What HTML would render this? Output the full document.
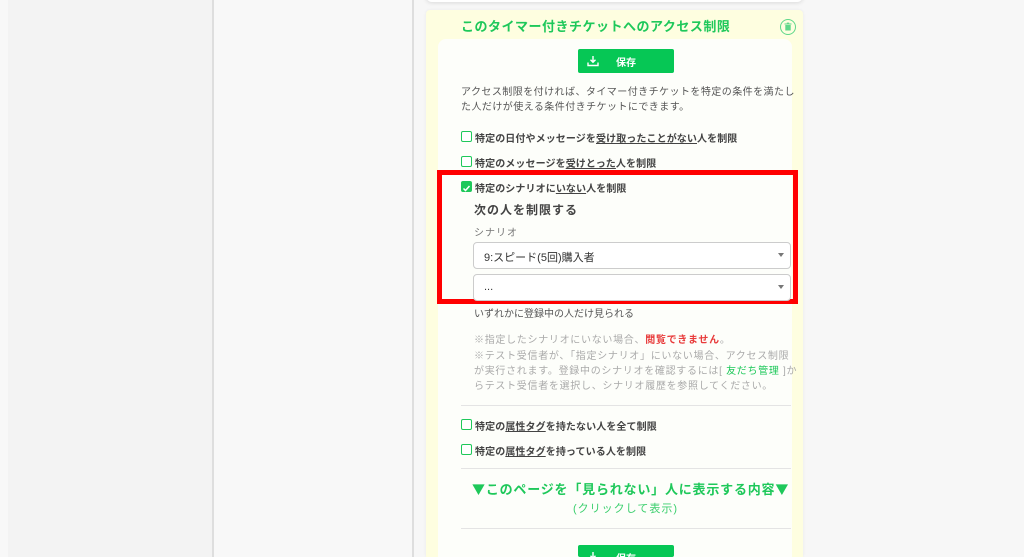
<!DOCTYPE html>
<html style="width:1024px;height:557px;overflow:hidden"><head><meta charset="utf-8"><style>
*{box-sizing:border-box;margin:0;padding:0}
body{width:1024px;height:557px;overflow:hidden;background:#f7f7f7;font-family:"Liberation Sans","Noto Sans CJK JP",sans-serif;position:relative;color:#444}
.a{position:absolute}
.t{position:absolute;white-space:nowrap}
.cb{position:absolute;width:11px;height:11px;border:1.5px solid #1ec85a;border-radius:2px;background:#fff}
.lb{font-size:10px;font-weight:bold;color:#444;letter-spacing:.1px}
.u{text-decoration:underline}
.btn{position:absolute;left:578px;width:96px;height:24px;background:#06c755;border-radius:2px;color:#fff;font-size:10px;font-weight:bold;overflow:hidden}
.sel{position:absolute;left:473px;width:318px;height:27px;border:1px solid #ccc;border-radius:4px;background:#fff;font-size:11px;color:#333;padding:6px 0 0 10px}
.sel:after{content:"";position:absolute;right:6px;top:10px;border-left:3px solid transparent;border-right:3px solid transparent;border-top:4px solid #777}
.note{font-size:10px;color:#aaa;letter-spacing:.7px}
.hr{position:absolute;left:461px;width:330px;height:1px;background:#e4e4e4}
.j{font-family:"Noto Sans CJK JP",sans-serif}
</style></head><body>
<div class="a" style="left:0;top:0;width:8px;height:557px;background:#f8f8f8"></div>
<div class="a" style="left:8px;top:0;width:204px;height:557px;background:#f3f3f3"></div>
<div class="a" style="left:212px;top:0;width:2px;height:557px;background:#dedede"></div>
<div class="a" style="left:214px;top:0;width:198px;height:557px;background:#f8f8f8"></div>
<div class="a" style="left:412px;top:0;width:2px;height:557px;background:#dedede"></div>
<div class="a" style="left:426px;top:-10px;width:377px;height:12px;background:#fff;border-radius:6px;box-shadow:0 1px 4px rgba(0,0,0,.12)"></div>
<div class="a" style="left:426px;top:10px;width:377px;height:547px;background:#fefee0;border-radius:4px 4px 0 0;box-shadow:0 0 3px rgba(0,0,0,.06)"></div>
<div class="a" style="left:438px;top:39px;width:354px;height:518px;background:#fdfefa;border-radius:8px 8px 0 0"></div>
<div class="t" style="left:461px;top:16px;font-size:13px;font-weight:bold;color:#1ec85a;letter-spacing:.5px">このタイマー付きチケットへのアクセス制限</div>
<svg class="a" style="left:779px;top:18px" width="18" height="18" viewBox="0 0 18 18"><circle cx="9" cy="9" r="7.5" fill="none" stroke="#5fd88a" stroke-width="1"/><rect x="6.3" y="7" width="5.4" height="5.5" fill="#5fd88a"/><rect x="5.5" y="5.5" width="7" height="1" fill="#5fd88a"/><rect x="7.8" y="4.6" width="2.4" height="1" fill="#5fd88a"/></svg>
<div class="btn" style="top:49px"><svg class="a" style="left:9px;top:6px" width="12" height="12" viewBox="0 0 12 12"><path d="M6 1v6M3.5 4.8L6 7.3 8.5 4.8M1 7.5v3h10v-3" fill="none" stroke="#fff" stroke-width="1.4"/></svg><span class="t" style="left:38px;top:5px">保存</span></div>
<div class="t" style="left:461px;top:85px;font-size:10px;color:#555;letter-spacing:.45px;line-height:15px">アクセス制限を付ければ、タイマー付きチケットを特定の条件を満たし<br>た人だけが使える条件付きチケットにできます。</div>
<div class="cb" style="left:461px;top:131px"></div><div class="t lb" style="left:475px;top:130px">特定の日付やメッセージを<span class="u">受け取ったことがない</span>人を制限</div>
<div class="cb" style="left:461px;top:156px"></div><div class="t lb" style="left:475px;top:155px">特定のメッセージを<span class="u">受けとった</span>人を制限</div>
<div class="a" style="left:437px;top:170px;width:361px;height:134px;border:5px solid #f00"></div>
<div class="a" style="left:461px;top:181px;width:11px;height:11px;background:#1ec85a;border-radius:2px"><svg width="11" height="11" viewBox="0 0 11 11"><path d="M2.5 5.5l2 2 4-4.5" fill="none" stroke="#fff" stroke-width="1.5"/></svg></div>
<div class="t lb" style="left:475px;top:180px">特定のシナリオに<span class="u">いない</span>人を制限</div>
<div class="t" style="left:474px;top:201px;font-size:12px;font-weight:bold;color:#444;letter-spacing:1px">次の人を制限する</div>
<div class="t" style="left:474px;top:224px;font-size:10px;color:#777;letter-spacing:1px">シナリオ</div>
<div class="sel" style="top:242px">9:スピード(5回)購入者</div>
<div class="sel" style="top:274px">...</div>
<div class="t" style="left:474px;top:305px;font-size:10px;color:#555">いずれかに登録中の人だけ見られる</div>
<div class="t note" style="left:474px;top:331px">※指定したシナリオにいない場合、<span style="color:#e83a3a;font-weight:bold">閲覧できません</span>。</div>
<div class="t note" style="left:474px;top:349px;line-height:15px">※テスト受信者が、「指定シナリオ」にいない場合、アクセス制限<br>が実行されます。登録中のシナリオを確認するには[ <span style="color:#1ec85a">友だち管理</span> ]か<br>らテスト受信者を選択し、シナリオ履歴を参照してください。</div>
<div class="hr" style="top:405px"></div>
<div class="cb" style="left:461px;top:419px"></div><div class="t lb" style="left:475px;top:418px">特定の<span class="u">属性タグ</span>を持たない人を全て制限</div>
<div class="cb" style="left:461px;top:444px"></div><div class="t lb" style="left:475px;top:443px">特定の<span class="u">属性タグ</span>を持っている人を制限</div>
<div class="hr" style="top:468px"></div>
<div class="t" style="left:472px;top:479px;font-size:13px;font-weight:bold;color:#1ec85a;letter-spacing:.8px"><span class="j">▼</span>このページを「見られない」人に表示する内容<span class="j">▼</span></div>
<div class="t" style="left:573px;top:500px;font-size:11px;color:#3ccf6e;letter-spacing:1px">(クリックして表示)</div>
<div class="hr" style="top:528px"></div>
<div class="btn" style="top:545px;height:12px"><svg class="a" style="left:9px;top:6px" width="12" height="12" viewBox="0 0 12 12"><path d="M6 1v6M3.5 4.8L6 7.3 8.5 4.8M1 7.5v3h10v-3" fill="none" stroke="#fff" stroke-width="1.4"/></svg><span class="t" style="left:38px;top:5px">保存</span></div>
</body></html>
